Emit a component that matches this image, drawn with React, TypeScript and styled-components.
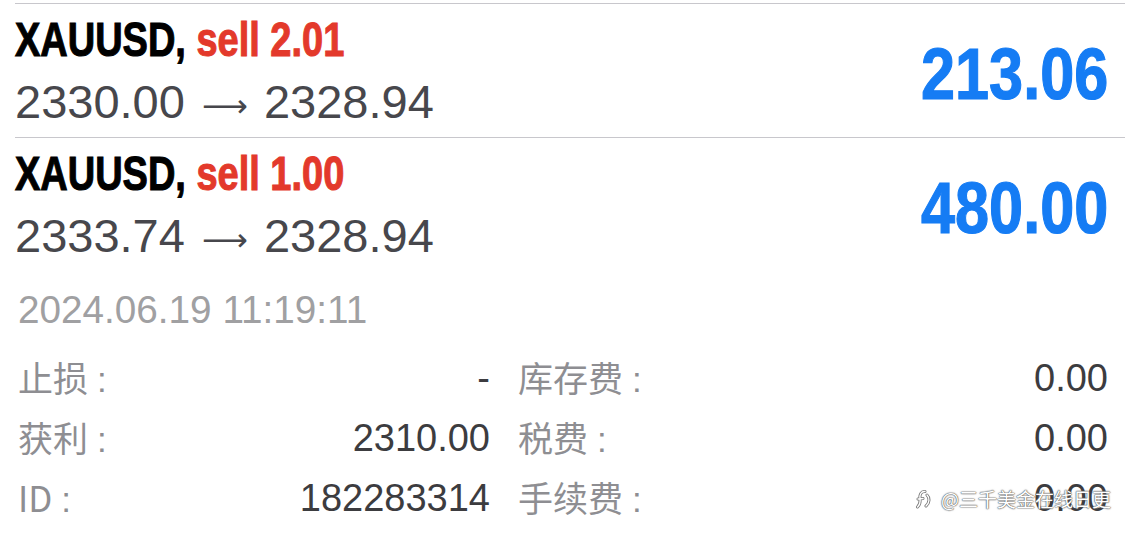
import React from "react";
import styled, { createGlobalStyle } from "styled-components";

const GlobalStyle = createGlobalStyle`
  html, body {
    margin: 0;
    padding: 0;
    background: #ffffff;
  }
  body {
    font-family: "Liberation Sans", Arial, sans-serif;
    overflow: hidden;
  }
`;

const Page = styled.div`
  position: relative;
  width: 1125px;
  height: 535px;
  background: #ffffff;
  display: flex;
  flex-direction: column;
  padding-top: 3px;
  box-sizing: border-box;
  overflow: hidden;
`;

const TradeRow = styled.div`
  margin-left: 15px;
  border-top: 1px solid #c8c7cc;
  display: flex;
  align-items: center;
  justify-content: space-between;
  padding: 5px 17px 3px 0;
  height: 134px;
  box-sizing: border-box;
`;

const TradeInfo = styled.div`
  display: flex;
  flex-direction: column;
`;

const Title = styled.div`
  font-family: "Liberation Sans", Arial, sans-serif;
  font-weight: 700;
  font-size: 49px;
  line-height: 60px;
  color: #000000;
  white-space: nowrap;
  -webkit-text-stroke: 1.1px currentColor;
`;

const Condensed = styled.span<{ $scale: number; $origin: string }>`
  display: inline-block;
  transform: scaleX(${(p) => p.$scale});
  transform-origin: ${(p) => p.$origin} center;
`;

const Side = styled.span`
  color: #e3392b;
`;

const Prices = styled.div`
  font-family: "Liberation Sans", Arial, sans-serif;
  font-size: 47px;
  line-height: 66px;
  color: #47474c;
  white-space: nowrap;
`;

const Arrow = styled.span`
  font-family: "DejaVu Sans", sans-serif;
  font-size: 32px;
  line-height: 0;
  margin: 0 3px 0 4px;
  vertical-align: 1px;
`;

const Profit = styled.div`
  font-family: "Liberation Sans", Arial, sans-serif;
  font-weight: 700;
  font-size: 72px;
  line-height: 74px;
  color: #157cf4;
  padding-top: 5px;
  white-space: nowrap;
  -webkit-text-stroke: 1.2px currentColor;
`;

const DateLine = styled.div`
  padding: 14px 0 0 18px;
  font-family: "Liberation Sans", Arial, sans-serif;
  font-size: 38.7px;
  line-height: 50px;
  color: #a0a0a2;
`;

const DetailGrid = styled.div`
  margin-top: 13px;
  padding: 0 17px 0 18px;
  display: grid;
  grid-template-columns: 472px 590px;
  column-gap: 28px;
  grid-auto-rows: 60px;
`;

const Cell = styled.div`
  display: flex;
  align-items: center;
  justify-content: space-between;
`;

const Label = styled.span`
  font-family: "Noto Sans CJK SC", "Liberation Sans", sans-serif;
  font-size: 35px;
  line-height: 60px;
  color: #8e8e92;
`;

const Colon = styled.span`
  font-family: "Liberation Sans", sans-serif;
  margin-left: 9px;
`;

const Value = styled.span`
  font-family: "Liberation Sans", Arial, sans-serif;
  font-size: 38px;
  line-height: 60px;
  color: #3c3c3f;
`;

const Watermark = styled.div`
  position: absolute;
  right: 14px;
  bottom: 24px;
  display: flex;
  align-items: center;
  gap: 10px;
  font-family: "Noto Sans CJK SC", "Liberation Sans", sans-serif;
  font-size: 19px;
  line-height: 24px;
  color: #ffffff;
  text-shadow: 0 0 1px #555, 0 0 1px #555, 0 0 2px #777;
  white-space: nowrap;
`;

const trades = [
  { side: "sell 2.01", open: "2330.00", close: "2328.94", profit: "213.06" },
  { side: "sell 1.00", open: "2333.74", close: "2328.94", profit: "480.00" },
];

const details: [string, string][] = [
  ["止损", "-"],
  ["库存费", "0.00"],
  ["获利", "2310.00"],
  ["税费", "0.00"],
  ["ID", "182283314"],
  ["手续费", "0.00"],
];

const LOGO_D = "M10 2.5 C6 2 4.5 6 5 9.5 C5.5 13 4.5 16 2.5 18 M3 10 L8 9.5 M12 6 C15 9 14.5 14 11 17";

const Logo = () => (
  <svg width="16" height="20" viewBox="0 0 16 20" fill="none">
    <path d={LOGO_D} stroke="#777" strokeWidth="3" strokeLinecap="round" />
    <path d={LOGO_D} stroke="#ffffff" strokeWidth="1.4" strokeLinecap="round" />
  </svg>
);

export default function App() {
  return (
    <>
      <GlobalStyle />
      <Page>
        {trades.map((t, i) => (
          <TradeRow key={i}>
            <TradeInfo>
              <Title>
                <Condensed $scale={0.775} $origin="left">
                  XAUUSD, <Side>{t.side}</Side>
                </Condensed>
              </Title>
              <Prices>
                {t.open} <Arrow>⟶</Arrow> {t.close}
              </Prices>
            </TradeInfo>
            <Profit>
              <Condensed $scale={0.85} $origin="right">
                {t.profit}
              </Condensed>
            </Profit>
          </TradeRow>
        ))}
        <DateLine>2024.06.19 11:19:11</DateLine>
        <DetailGrid>
          {details.map(([l, v], i) => (
            <Cell key={i}>
              <Label>
                {l}
                <Colon>:</Colon>
              </Label>
              <Value>{v}</Value>
            </Cell>
          ))}
        </DetailGrid>
        <Watermark>
          <Logo />
          <span>@三千美金在线日更</span>
        </Watermark>
      </Page>
    </>
  );
}
